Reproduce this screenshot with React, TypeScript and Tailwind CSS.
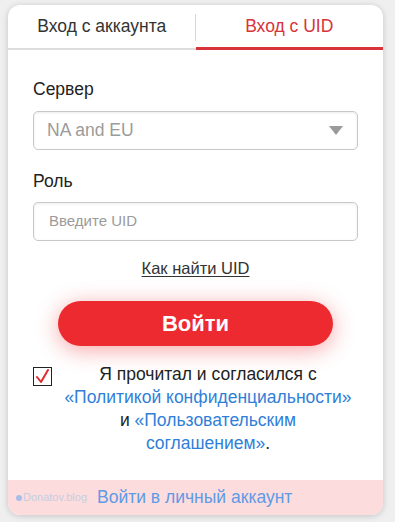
import { useState } from "react";

function Caret() {
  return (
    <svg width="14" height="9" viewBox="0 0 14 9" className="shrink-0">
      <path d="M0 0 L14 0 L7 9 Z" fill="#9a9a9a" />
    </svg>
  );
}

function Check() {
  return (
    <svg width="15" height="15" viewBox="0 0 15 15">
      <path d="M2 8 L6 13 L13 1" fill="none" stroke="#e02a2f" strokeWidth="2" strokeLinecap="round" strokeLinejoin="round" />
    </svg>
  );
}

export default function App() {
  const [tab, setTab] = useState<"account" | "uid">("uid");
  const [agreed, setAgreed] = useState(true);

  return (
    <div className="min-h-[522px] w-[395px] bg-[#efefef] pt-[5px] pb-[7px] font-['Liberation_Sans',Arial,sans-serif]">
      <div className="ml-2 flex w-[375px] flex-col overflow-hidden rounded-[12px] bg-white shadow-[0_1px_6px_rgba(0,0,0,0.18)]">
        {/* tabs */}
        <div className="flex h-[45px] items-stretch">
          <button
            type="button"
            onClick={() => setTab("account")}
            className={`relative flex flex-1 items-center justify-center border-b-2 text-[17.5px] ${
              tab === "account" ? "border-[#d8333a] text-[#d8333a]" : "border-[#dcdcdc] text-[#333]"
            }`}
          >
            Вход с аккаунта
            <span className="absolute top-[9px] right-0 h-[27px] w-px bg-[#d6d6d6]" />
          </button>
          <button
            type="button"
            onClick={() => setTab("uid")}
            className={`flex flex-1 items-center justify-center text-[17.5px] ${
              tab === "uid" ? "border-b-[3px] border-[#d8333a] text-[#d8333a]" : "border-b-2 border-[#dcdcdc] text-[#333]"
            }`}
          >
            Вход с UID
          </button>
        </div>

        {/* form */}
        <div className="flex flex-col px-[25px] pt-[29px]">
          <p className="text-[17.5px] leading-[20px] text-[#222]">Сервер</p>
          <div className="mt-[12px] flex h-[39px] items-center justify-between rounded-[5px] border border-[#c8c8c8] pr-[14px] pl-[13px] shadow-[inset_0_1px_3px_rgba(0,0,0,0.08)]">
            <span className="text-[17.5px] text-[#9b9b9b]">NA and EU</span>
            <Caret />
          </div>

          <p className="mt-[21px] text-[17.5px] leading-[20px] text-[#222]">Роль</p>
          <div className="mt-[11px] flex h-[39px] items-center rounded-[5px] border border-[#c8c8c8] pl-[15px] shadow-[inset_0_1px_3px_rgba(0,0,0,0.08)]">
            <span className="text-[15px] text-[#9b9b9b]">Введите UID</span>
          </div>

          <a href="#" className="mt-[17px] self-center text-[16.5px] leading-[20px] text-[#333] underline underline-offset-2">
            Как найти UID
          </a>

          <button
            type="button"
            className="mt-[23px] flex h-[45px] w-[275px] items-center justify-center self-center rounded-full bg-[#ec2a2f] text-[22px] font-bold text-white shadow-[0_4px_22px_rgba(236,42,47,0.42)]"
          >
            Войти
          </button>

          <div className="mt-[21px] flex items-start">
            <button
              type="button"
              onClick={() => setAgreed(!agreed)}
              className="flex h-[19px] w-[19px] shrink-0 items-center justify-center border border-[#222] bg-white"
            >
              {agreed ? <Check /> : null}
            </button>
            <p className="-mt-[4px] flex-1 pl-[6px] text-center text-[17.5px] leading-[23px] text-[#222]">
              Я прочитал и согласился с<br />
              <a href="#" className="text-[#2f7fd9]">«Политикой конфиденциальности»</a>
              <br />и <a href="#" className="text-[#2f7fd9]">«Пользовательским</a>
              <br />
              <a href="#" className="text-[#2f7fd9]">соглашением»</a>.
            </p>
          </div>
        </div>

        {/* footer */}
        <div className="mt-[25px] flex h-[35px] items-center bg-[#fddcde] pl-[8px]">
          <span className="flex items-center text-[11px] text-[#c7cde0]">
            <span className="mr-[1px] inline-block h-[6px] w-[6px] rounded-full bg-[#a9bde8]" />
            Donatov.blog
          </span>
          <a href="#" className="ml-[10px] text-[17.5px] text-[#5d9be6]">
            Войти в личный аккаунт
          </a>
        </div>
      </div>
    </div>
  );
}
